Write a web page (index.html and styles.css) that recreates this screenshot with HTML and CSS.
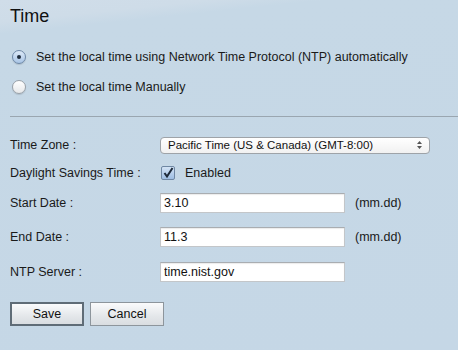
FILE: index.html
```html
<!DOCTYPE html>
<html lang="en">
<head>
  <meta charset="UTF-8" />
  <title>Time</title>
  <link rel="stylesheet" href="styles.css">
</head>
<body>
  <div class="page">
    <h1>Time</h1>

    <div class="radio-row">
      <span class="radio checked"></span>
      <span>Set the local time using Network Time Protocol (NTP) automatically</span>
    </div>
    <div class="radio-row">
      <span class="radio"></span>
      <span>Set the local time Manually</span>
    </div>

    <div class="divider"></div>

    <div class="row r-zone">
      <label>Time Zone :</label>
      <div class="select">
        <span>Pacific Time (US &amp; Canada) (GMT-8:00)</span>
        <svg width="7" height="10" viewBox="0 0 7 10">
          <path d="M1 4 L3.5 1 L6 4 Z M1 6 L3.5 9 L6 6 Z" fill="#555"/>
        </svg>
      </div>
    </div>

    <div class="row r-dst">
      <label>Daylight Savings Time :</label>
      <span class="check">
        <svg width="12" height="12" viewBox="0 0 12 12">
          <path d="M2.5 6 L5 9.5 L10.5 1" fill="none" stroke="#1d2a3a" stroke-width="2"/>
        </svg>
      </span>
      <span class="check-text">Enabled</span>
    </div>

    <div class="row r-date">
      <label>Start Date :</label>
      <input class="text" value="3.10" />
      <span class="hint">(mm.dd)</span>
    </div>

    <div class="row r-date">
      <label>End Date :</label>
      <input class="text" value="11.3" />
      <span class="hint">(mm.dd)</span>
    </div>

    <div class="row r-ntp">
      <label>NTP Server :</label>
      <input class="text" value="time.nist.gov" />
    </div>

    <div class="buttons">
      <button class="btn default">Save</button>
      <button class="btn">Cancel</button>
    </div>
  </div>
</body>
</html>
```

FILE: styles.css
```css
html, body {
  margin: 0;
  padding: 0;
  height: 100%;
}

body {
  font-family: 'Liberation Sans', Arial, sans-serif;
  font-size: 12.5px;
  color: #1a1a1a;
  background: linear-gradient(174deg, #d0dde9 0px, #cedce8 22px, #c6d8e6 34px, #c5d7e6 100%);
}

.page {
  padding: 0 0 0 10px;
}

h1 {
  margin: 0;
  padding-top: 6px;
  height: 36px;
  font-size: 18px;
  font-weight: normal;
  line-height: 21px;
  color: #111;
}

.radio-row {
  display: flex;
  align-items: center;
  height: 30px;
}

.radio {
  width: 12px;
  height: 12px;
  margin: 0 10px 0 2px;
  border-radius: 50%;
  border: 1px solid #9aa1a8;
  background: linear-gradient(#ffffff, #e6e8ea);
  box-shadow: 0 1px 1px rgba(0,0,0,0.12);
  display: flex;
  align-items: center;
  justify-content: center;
}

.radio.checked {
  border-color: #6d87a6;
  background: linear-gradient(#dce9f7, #a9c5e6);
}

.radio.checked::after {
  content: '';
  width: 4px;
  height: 4px;
  border-radius: 50%;
  background: #1f2c3b;
}

.divider {
  margin-top: 14px;
  height: 1px;
  background: #9aa6b0;
}

.row {
  display: flex;
  align-items: center;
}

.row label {
  width: 150px;
  flex: none;
}

.r-zone {
  margin-top: 14px;
  height: 28px;
}

.r-dst {
  height: 27px;
}

.r-date {
  height: 34px;
}

.r-ntp {
  height: 36px;
}

.select {
  width: 270px;
  height: 17px;
  box-sizing: border-box;
  border: 1px solid #9ea3a8;
  border-radius: 4px;
  background: linear-gradient(#ffffff, #f1f1f1);
  display: flex;
  align-items: center;
  justify-content: space-between;
  padding: 0 6px 0 7px;
  font-size: 11.5px;
  color: #111;
}

.check {
  width: 12px;
  height: 12px;
  margin: 0 10px 0 1px;
  border: 1px solid #6f87a3;
  border-radius: 2px;
  background: linear-gradient(#d3e3f5, #9dbde3);
  display: flex;
}

.text {
  width: 185px;
  height: 20px;
  box-sizing: border-box;
  margin: 0;
  padding: 0 3px;
  border: 1px solid #c3c6c9;
  border-top-color: #a9adb1;
  box-shadow: inset 0 1px 1px rgba(0,0,0,0.08);
  background: #fff;
  font-family: 'Liberation Sans', Arial, sans-serif;
  font-size: 12.5px;
  color: #111;
}

.hint {
  margin-left: 10px;
}

.buttons {
  display: flex;
  gap: 6px;
  margin-top: 12px;
}

.btn {
  width: 74px;
  height: 24px;
  box-sizing: border-box;
  border: 1px solid #8d959c;
  background: linear-gradient(#fafbfc, #e4e7ea 60%, #d9dde1);
  font-family: 'Liberation Sans', Arial, sans-serif;
  font-size: 12.5px;
  color: #111;
  padding: 0;
}

.btn.default {
  border: 2px solid #5f6c77;
}
```
